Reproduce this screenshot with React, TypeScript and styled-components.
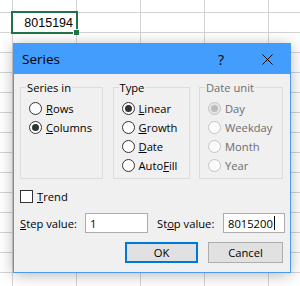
import React from 'react';
import styled, { createGlobalStyle } from 'styled-components';

const GlobalStyle = createGlobalStyle`
  html, body {
    margin: 0;
    padding: 0;
  }
  body {
    font-family: 'Open Sans', 'Noto Sans', sans-serif;
    font-size: 11.2px;
    color: #000;
  }
`;

interface RadioProps {
  checked?: boolean;
  disabled?: boolean;
}

const App = () => {
  return (
    <>
      <GlobalStyle />
      <Sheet>
        <SelectedCell>
          <CellValue>8015194</CellValue>
          <FillHandle />
        </SelectedCell>

        <Dialog>
          <TitleBar>
            <Title>Series</Title>
            <TitleButton>?</TitleButton>
            <TitleButton>
              <svg width="11" height="11" viewBox="0 0 11 11">
                <path d="M0.5 0.5 L10.5 10.5 M10.5 0.5 L0.5 10.5" stroke="#000" strokeWidth="1" />
              </svg>
            </TitleButton>
          </TitleBar>

          <Body>
            <Groups>
              <Group $width={83}>
                <Legend>Series in</Legend>
                <Option>
                  <RadioDot />
                  <span><u>R</u>ows</span>
                </Option>
                <Option>
                  <RadioDot checked />
                  <span><u>C</u>olumns</span>
                </Option>
              </Group>

              <Group $width={77}>
                <Legend>Type</Legend>
                <Option>
                  <RadioDot checked />
                  <span><u>L</u>inear</span>
                </Option>
                <Option>
                  <RadioDot />
                  <span><u>G</u>rowth</span>
                </Option>
                <Option>
                  <RadioDot />
                  <span><u>D</u>ate</span>
                </Option>
                <Option>
                  <RadioDot />
                  <span>Auto<u>F</u>ill</span>
                </Option>
              </Group>

              <Group $width={84}>
                <Legend $disabled>Date unit</Legend>
                <Option $disabled>
                  <RadioDot checked disabled />
                  <span>Day</span>
                </Option>
                <Option $disabled>
                  <RadioDot disabled />
                  <span>Weekday</span>
                </Option>
                <Option $disabled>
                  <RadioDot disabled />
                  <span>Month</span>
                </Option>
                <Option $disabled>
                  <RadioDot disabled />
                  <span>Year</span>
                </Option>
              </Group>
            </Groups>

            <TrendRow>
              <CheckBox />
              <span><u>T</u>rend</span>
            </TrendRow>

            <ValuesRow>
              <FieldLabel $width={65}><u>S</u>tep value:</FieldLabel>
              <Field $width={63}>1</Field>
              <FieldLabel $width={66} $gap={9}>St<u>o</u>p value:</FieldLabel>
              <Field $width={62}>
                8015200
                <Caret />
              </Field>
            </ValuesRow>

            <ButtonsRow>
              <Button $primary>OK</Button>
              <Button>Cancel</Button>
            </ButtonsRow>
          </Body>
        </Dialog>
      </Sheet>
    </>
  );
};

const RadioDot = ({ checked, disabled }: RadioProps) => (
  <RadioCircle $disabled={disabled} $checked={checked}>
    {checked && <RadioInner $disabled={disabled} />}
  </RadioCircle>
);

const Sheet = styled.div`
  position: relative;
  width: 300px;
  height: 286px;
  overflow: hidden;
  background-color: #fff;
  background-image: linear-gradient(to right, #d4d4d4 1px, transparent 1px),
    linear-gradient(to bottom, #d4d4d4 1px, transparent 1px);
  background-size: 64px 20px;
  background-position: 12px 12px;
`;

const SelectedCell = styled.div`
  position: absolute;
  left: 11px;
  top: 11px;
  width: 67px;
  height: 23px;
  box-sizing: border-box;
  border: 2px solid #217346;
  display: flex;
  align-items: center;
  justify-content: flex-end;
  padding-right: 3px;
`;

const CellValue = styled.span`
  font-family: 'Liberation Sans', Arial, sans-serif;
  font-size: 12.5px;
  color: #000;
`;

const FillHandle = styled.div`
  position: absolute;
  right: -3px;
  bottom: -3px;
  width: 5px;
  height: 5px;
  background: #217346;
  border: 1px solid #fff;
  border-width: 1px 0 0 1px;
`;

const Dialog = styled.div`
  position: absolute;
  left: 13px;
  top: 43px;
  width: 278px;
  height: 230px;
  box-sizing: border-box;
  border: 1px solid #4a9bf0;
  background: #f0f0f0;
  box-shadow: 0 2px 14px rgba(0, 0, 0, 0.28);
  display: flex;
  flex-direction: column;
`;

const TitleBar = styled.div`
  height: 30px;
  flex: none;
  background: #429dfd;
  display: flex;
  align-items: center;
  padding-left: 8px;
`;

const Title = styled.div`
  flex: 1;
  font-size: 13.5px;
  color: #000;
`;

const TitleButton = styled.div`
  width: 46px;
  height: 30px;
  display: flex;
  align-items: center;
  justify-content: center;
  font-size: 14px;
  color: #000;
`;

const Body = styled.div`
  flex: 1;
  display: flex;
  flex-direction: column;
  padding: 6px 7px 0 6px;
`;

const Groups = styled.div`
  display: flex;
  justify-content: space-between;
  height: 99px;
`;

const Group = styled.fieldset<{ $width: number }>`
  width: ${(p) => p.$width}px;
  box-sizing: border-box;
  margin: 0;
  padding: 4px 0 0 8px;
  min-width: 0;
  border: 1px solid #dcdcdc;
  display: flex;
  flex-direction: column;
`;

const Legend = styled.legend<{ $disabled?: boolean }>`
  padding: 0 1px;
  margin-left: -3px;
  color: ${(p) => (p.$disabled ? '#6d6d6d' : '#000')};
  line-height: 15px;
`;

const Option = styled.div<{ $disabled?: boolean }>`
  height: 19px;
  display: flex;
  align-items: center;
  gap: 4px;
  white-space: nowrap;
  color: ${(p) => (p.$disabled ? '#6d6d6d' : '#000')};
`;

const RadioCircle = styled.span<{ $disabled?: boolean; $checked?: boolean }>`
  width: 13px;
  height: 13px;
  box-sizing: border-box;
  border-radius: 50%;
  flex: none;
  border: 1px solid ${(p) => (p.$disabled ? '#c4c4c4' : '#333')};
  background: ${(p) => (p.$disabled && p.$checked ? '#e6e6e6' : p.$disabled ? '#fbfbfb' : '#fff')};
  display: flex;
  align-items: center;
  justify-content: center;
`;

const RadioInner = styled.span<{ $disabled?: boolean }>`
  width: 7px;
  height: 7px;
  border-radius: 50%;
  background: ${(p) => (p.$disabled ? '#bcbcbc' : '#333')};
`;

const TrendRow = styled.div`
  margin-top: 8px;
  height: 18px;
  display: flex;
  align-items: center;
  gap: 4px;
`;

const CheckBox = styled.span`
  width: 13px;
  height: 13px;
  box-sizing: border-box;
  border: 1px solid #333;
  background: #fff;
  flex: none;
`;

const ValuesRow = styled.div`
  margin-top: 8px;
  height: 20px;
  display: flex;
  align-items: center;
`;

const FieldLabel = styled.span<{ $width: number; $gap?: number }>`
  width: ${(p) => p.$width}px;
  margin-left: ${(p) => p.$gap || 0}px;
  flex: none;
  white-space: nowrap;
`;

const Field = styled.div<{ $width: number }>`
  width: ${(p) => p.$width}px;
  height: 20px;
  box-sizing: border-box;
  border: 1px solid #acacac;
  background: #fff;
  display: flex;
  align-items: center;
  padding-left: 4px;
  flex: none;
`;

const Caret = styled.span`
  width: 1px;
  height: 14px;
  background: #000;
  margin-left: 1px;
`;

const ButtonsRow = styled.div`
  margin-top: 9px;
  display: flex;
  justify-content: flex-end;
  gap: 10px;
`;

const Button = styled.div<{ $primary?: boolean }>`
  width: ${(p) => (p.$primary ? 73 : 75)}px;
  height: 21px;
  box-sizing: border-box;
  border: ${(p) => (p.$primary ? '2px solid #0078d7' : '1px solid #adadad')};
  background: #e1e1e1;
  display: flex;
  align-items: center;
  justify-content: center;
`;

export default App;
